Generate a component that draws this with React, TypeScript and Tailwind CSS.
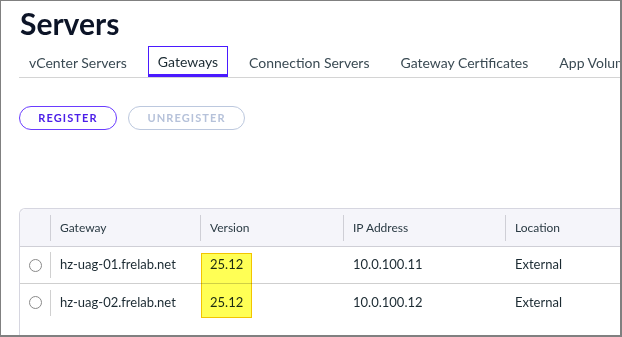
import { useState } from "react";

const tabs = [
  "vCenter Servers",
  "Gateways",
  "Connection Servers",
  "Gateway Certificates",
  "App Volumes Managers",
];

const rows = [
  { name: "hz-uag-01.frelab.net", version: "25.12", ip: "10.0.100.11", location: "External" },
  { name: "hz-uag-02.frelab.net", version: "25.12", ip: "10.0.100.12", location: "External" },
];

export default function App() {
  const [active, setActive] = useState(1);

  return (
    <div
      className="w-[622px] h-[337px] overflow-hidden bg-white border-t border-l border-r-2 border-b-2 border-[#808080] text-[#1b2a32]"
      style={{ fontFamily: "Lato, 'Noto Sans', sans-serif" }}
    >
      <h1 className="pl-[19px] pt-[3px] text-[30px] leading-[38px] font-bold text-[#0c1427]">
        Servers
      </h1>

      <div className="ml-[18px] mt-[4px] flex gap-[11px] border-b border-[#d4d4d4] whitespace-nowrap overflow-hidden">
        {tabs.map((t, i) => (
          <button
            key={t}
            type="button"
            onClick={() => setActive(i)}
            className={
              i === active
                ? "shrink-0 h-[31px] px-[9px] pt-[2px] text-[14px] text-[#1b2a32] border border-b-[3px] border-[#4a1aff] -mb-px"
                : "shrink-0 h-[31px] px-[9px] pt-[2px] text-[14px] text-[#3a4a53] border border-transparent"
            }
          >
            {t}
          </button>
        ))}
      </div>

      <div className="ml-[18px] mt-[28px] flex gap-[11px]">
        <button
          type="button"
          className="h-[24px] w-[98px] rounded-full border border-[#6a3cff] text-[11px] font-bold tracking-[0.1em] text-[#4c1fe8]"
        >
          REGISTER
        </button>
        <button
          type="button"
          disabled
          className="h-[24px] w-[117px] rounded-full border border-[#bcc8de] text-[11px] font-bold tracking-[0.1em] text-[#b6c2da]"
        >
          UNREGISTER
        </button>
      </div>

      <div className="relative ml-[18px] mt-[78px] w-[640px] rounded-tl-[6px] border-t border-l border-[#d6d6e0] text-[13px]">
        <div className="flex h-[38px] items-center bg-[#f5f5fa] border-b border-[#cfcfd6] rounded-tl-[6px] text-[12px] text-[#2a3a43]">
          <div className="w-[30px] h-full" />
          <Head w="w-[150px]">Gateway</Head>
          <Head w="w-[143px]">Version</Head>
          <Head w="w-[162px]">IP Address</Head>
          <Head w="w-[150px]">Location</Head>
        </div>
        {rows.map((r, i) => (
          <div
            key={r.name}
            className={
              i < rows.length - 1
                ? "flex h-[37px] items-center border-b border-[#cfcfcf]"
                : "flex h-[37px] items-center"
            }
          >
            <div className="w-[30px] flex justify-center">
              <span className="block size-[13px] rounded-full border border-[#8a8a8a] bg-white" />
            </div>
            <div className="w-[150px] h-[26px] flex items-center border-l border-[#d0d0d0] pl-[9px]">
              {r.name}
            </div>
            <div className="w-[143px] pl-[10px]">{r.version}</div>
            <div className="w-[162px] pl-[10px]">{r.ip}</div>
            <div className="w-[150px] pl-[10px]">{r.location}</div>
          </div>
        ))}
        <div className="h-[30px]" />
        {/* highlight annotation over the Version cells */}
        <div className="absolute left-[181px] top-[44px] w-[51px] h-[65px] border border-[#f2c500] bg-[#ffff55] mix-blend-multiply" />
      </div>
    </div>
  );
}

function Head({ w, children }: { w: string; children: string }) {
  return (
    <div className={`${w} h-[26px] flex items-center border-l border-[#cfcfd6] pl-[9px]`}>
      {children}
    </div>
  );
}
